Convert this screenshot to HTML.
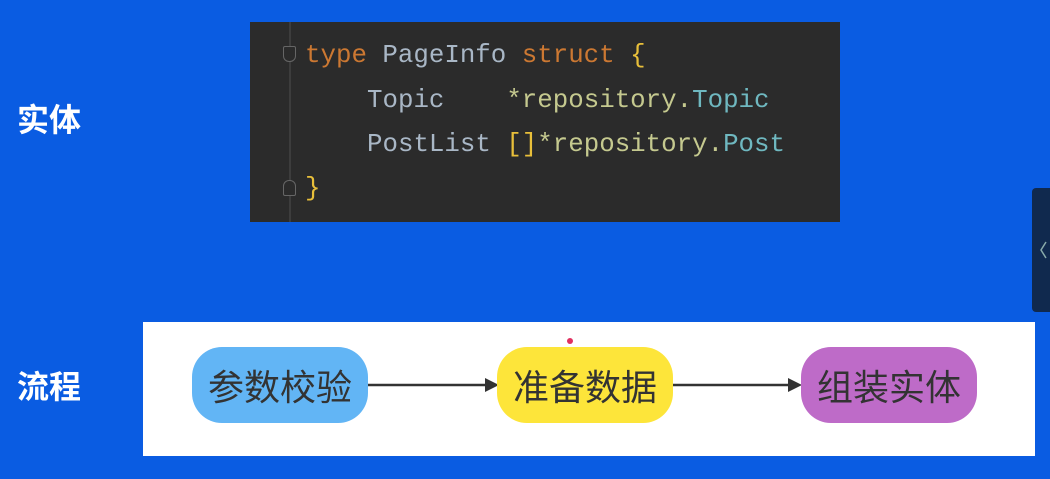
<!DOCTYPE html>
<html><head><meta charset="utf-8"><style>
html,body{margin:0;padding:0;}
body{width:1050px;height:479px;background:#0a5ce2;position:relative;overflow:hidden;font-family:"Liberation Sans","Noto Sans CJK SC",sans-serif;}
.lbl{position:absolute;left:17px;color:#fff;font-size:32px;font-weight:bold;line-height:1;}
.code{position:absolute;left:250px;top:22px;width:590px;height:200px;background:#2b2b2b;}
.gut{position:absolute;left:289px;top:22px;width:2px;height:200px;background:#3d3d3d;}
.ln{position:absolute;font-family:"Liberation Mono",monospace;font-size:25.8px;line-height:1;white-space:pre;color:#a9b7c6;}
.k{color:#cc7832}.b{color:#e8bf3a}.g{color:#c5c98f}.t{color:#6fb8c0}
.fold{position:absolute;left:283px;width:13px;height:16px;border:1.5px solid #666;box-sizing:border-box;}
.flow{position:absolute;left:143px;top:322px;width:892px;height:134px;background:#fff;}
.pill{position:absolute;top:25px;width:176px;height:76px;border-radius:30px;font-size:36px;color:#333;display:flex;align-items:center;justify-content:center;}
.tab{position:absolute;left:1032px;top:188px;width:18px;height:124px;background:#10294e;border-radius:4px 0 0 4px;}
</style></head><body>
<div class="lbl" style="top:104px">实体</div>
<div class="lbl" style="top:371px">流程</div>
<div class="code"></div>
<div class="gut"></div>
<div class="fold" style="top:46px;border-radius:2px 2px 6px 6px;background:#2b2b2b"></div>
<div class="fold" style="top:180px;border-radius:6px 6px 2px 2px;background:#2b2b2b"></div>
<div class="ln" style="left:305px;top:43px"><span class="k">type</span> PageInfo <span class="k">struct</span> <span class="b">{</span></div>
<div class="ln" style="left:367px;top:88px">Topic    <span class="g">*repository.</span><span class="t">Topic</span></div>
<div class="ln" style="left:367px;top:132px">PostList <span class="b">[]</span><span class="g">*repository.</span><span class="t">Post</span></div>
<div class="ln" style="left:305px;top:176px"><span class="b">}</span></div>
<div class="flow">
<svg width="892" height="134" style="position:absolute;left:0;top:0">
<line x1="225" y1="63" x2="342" y2="63" stroke="#333" stroke-width="2.5"/>
<polygon points="342,56 356,63 342,70" fill="#333"/>
<line x1="528" y1="63" x2="645" y2="63" stroke="#333" stroke-width="2.5"/>
<polygon points="645,56 659,63 645,70" fill="#333"/>
<circle cx="427" cy="19" r="3" fill="#e03060"/>
</svg>
<div class="pill" style="left:49px;background:#62b5f5">参数校验</div>
<div class="pill" style="left:354px;background:#fde53a">准备数据</div>
<div class="pill" style="left:658px;background:#be6bc8">组装实体</div>
</div>
<div class="tab"><svg width="18" height="124" style="position:absolute;left:0;top:0"><polyline points="14,54 9,62 14,70" fill="none" stroke="#8aa" stroke-width="1.5"/></svg></div>
</body></html>
